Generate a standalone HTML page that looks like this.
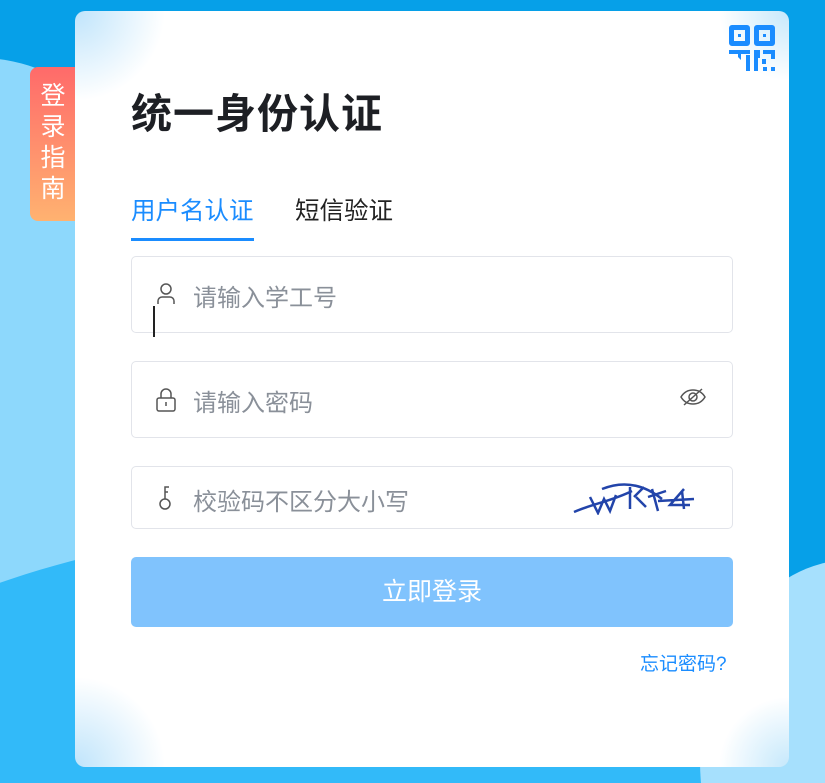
<!DOCTYPE html>
<html><head><meta charset="utf-8"><style>
*{margin:0;padding:0;box-sizing:border-box}
html,body{width:825px;height:783px;overflow:hidden}
body{font-family:"Liberation Sans","Noto Sans CJK SC",sans-serif}
#w{position:relative;width:825px;height:783px;overflow:hidden;background:#06a0e8}
.blob1{position:absolute;left:-300px;top:58px;width:560px;height:1000px;border-radius:50%;background:#8dd8fc}
.blob2{position:absolute;left:-300px;top:520px;width:1400px;height:700px;border-radius:50% 50% 0 0;background:#32baf9}
.blob3{position:absolute;left:700px;top:560px;width:300px;height:400px;border-radius:50%;background:#a6e0fd}
.card{position:absolute;left:75px;top:11px;width:714px;height:756px;border-radius:10px;background:
radial-gradient(circle at 0 0,#bfe4fb 0,rgba(255,255,255,0) 90px),
radial-gradient(circle at 100% 0,#c5e8fb 0,rgba(255,255,255,0) 70px),
radial-gradient(circle at 0 100%,#bfe4fb 0,rgba(255,255,255,0) 90px),
radial-gradient(circle at 100% 100%,#c5e8fb 0,rgba(255,255,255,0) 70px),#fff}
.guide{position:absolute;left:30px;top:67px;width:46px;height:154px;border-radius:8px 0 0 8px;background:linear-gradient(#ff6a6a,#ffb270);color:#fff;font-size:25px;line-height:31px;text-align:center;padding-top:14px}
h1{position:absolute;left:131px;top:80px;font-size:41px;font-weight:bold;color:#1d1f24;letter-spacing:1px}
.tab{position:absolute;top:192px;font-size:24.5px}
.field{position:absolute;left:131px;width:602px;border:1px solid #e2e4ea;border-radius:5px;background:#fff}
.ph{position:absolute;left:61px;font-size:24px;color:#8a9099}
.btn{position:absolute;left:131px;top:557px;width:602px;height:70px;border-radius:5px;background:#80c3fd;color:#fff;font-size:25px;text-align:center;line-height:70px}
</style></head><body><div id="w">
<div class="blob1"></div><div class="blob2"></div><div class="blob3"></div>
<div class="guide">登<br>录<br>指<br>南</div>
<div class="card"></div>
<svg style="position:absolute;left:729px;top:25px" width="47" height="47" viewBox="0 0 47 47">
<g fill="#1a8cff"><path d="M0 3a3 3 0 0 1 3-3h15a3 3 0 0 1 3 3v15a3 3 0 0 1-3 3H3a3 3 0 0 1-3-3zM5 5v11h11V5z"/><rect x="9" y="9" width="3" height="3"/>
<path d="M25 3a3 3 0 0 1 3-3h15a3 3 0 0 1 3 3v15a3 3 0 0 1-3 3H28a3 3 0 0 1-3-3zM30 5v11h11V5z"/><rect x="34" y="9" width="3" height="3"/>
<path d="M0 25h21v4H12v6L9 32v-3H0z"/><path d="M17 30h4v16h-4z"/><path d="M25 25h6v8h-2v13h-4z"/><path d="M34 25h12v9h-4v-5h-8z"/><rect x="33" y="34" width="4" height="5"/><rect x="34" y="42" width="4" height="4"/><rect x="42" y="42" width="4" height="4"/></g></svg>
<h1>统一身份认证</h1>
<div class="tab" style="left:131px;color:#1a8cff">用户名认证</div>
<div style="position:absolute;left:131px;top:238px;width:123px;height:3px;background:#1a8cff"></div>
<div class="tab" style="left:295px;color:#222">短信验证</div>
<div class="field" style="top:256px;height:77px"><div class="ph" style="top:21px">请输入学工号</div>
<svg style="position:absolute;left:24px;top:26px" width="20" height="22" viewBox="0 0 20 22" fill="none" stroke="#555" stroke-width="1.5"><circle cx="10" cy="6" r="5"/><path d="M2 21v-3a4 4 0 0 1 4-4h8a4 4 0 0 1 4 4v3"/></svg></div>
<div style="position:absolute;left:153px;top:306px;width:1.5px;height:31px;background:#222"></div>
<div class="field" style="top:361px;height:77px"><div class="ph" style="top:21px">请输入密码</div>
<svg style="position:absolute;left:24px;top:26px" width="20" height="24" viewBox="0 0 20 24" fill="none" stroke="#555" stroke-width="1.5"><rect x="1" y="10" width="18" height="13" rx="2"/><path d="M5 10V6a5 5 0 0 1 10 0v4M10 14v4"/></svg>
<svg style="position:absolute;left:548px;top:25px" width="26" height="20" viewBox="0 0 26 20" fill="none" stroke="#555" stroke-width="1.5"><path d="M1 10c3-5 7-7 12-7s9 2 12 7c-3 5-7 7-12 7S4 15 1 10z"/><circle cx="13" cy="10" r="4"/><path d="M4 18L22 2"/></svg></div>
<div class="field" style="top:466px;height:63px"><div class="ph" style="top:15px">校验码不区分大小写</div>
<svg style="position:absolute;left:26px;top:18px" width="14" height="26" viewBox="0 0 14 26" fill="none" stroke="#555" stroke-width="1.5"><circle cx="7" cy="19" r="5"/><path d="M7 14V2h4M7 7h3"/></svg>
<svg style="position:absolute;left:440px;top:12px" width="140" height="36" viewBox="0 0 140 36" fill="none" stroke="#2244aa" stroke-width="2.5"><path d="M2 33C20 25 40 22 60 12M18 18l8 16 6-14 6 12 6-16M30 10c20-8 40-6 60 10M58 8l0 22M62 18l10-10M64 18l10 10M80 10l6 22M76 18l18-6M86 22l36-2M112 10l-14 16h20M110 12l2 18"/></svg></div>
<div class="btn">立即登录</div>
<div style="position:absolute;left:640px;top:649px;font-size:19px;color:#1a8cff">忘记密码?</div>
</div></body></html>
